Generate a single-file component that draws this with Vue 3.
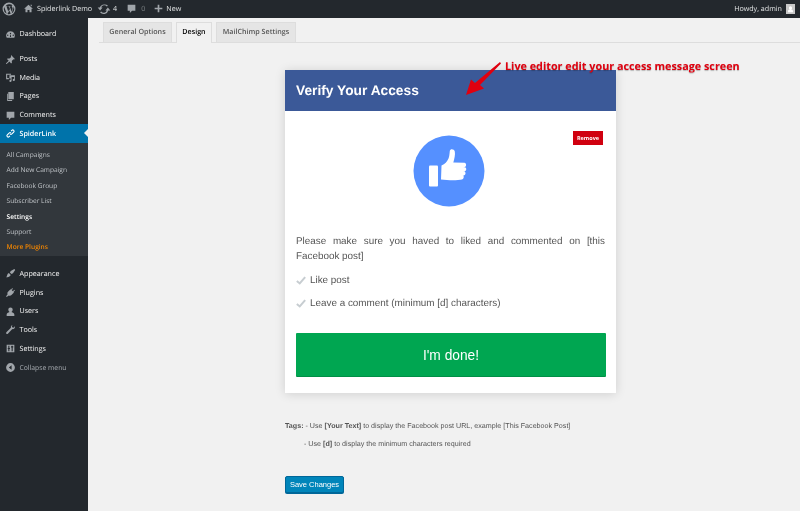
<script setup>
const top1 = [{ n: 'Posts', i: 'pin' }, { n: 'Media', i: 'media' }, { n: 'Pages', i: 'pages' }, { n: 'Comments', i: 'comment' }]
const subs = ['All Campaigns', 'Add New Campaign', 'Facebook Group', 'Subscriber List', 'Settings', 'Support', 'More Plugins']
const bottom = [{ n: 'Appearance', i: 'brush' }, { n: 'Plugins', i: 'plug' }, { n: 'Users', i: 'user' }, { n: 'Tools', i: 'wrench' }, { n: 'Settings', i: 'sliders' }]
const paths = {
  gauge: 'M10 4a8 8 0 0 0-8 8c0 1.600.5 3 1.200 4h13.600A8 8 0 0 0 10 4zm-5 8.500a1.200 1.200 0 1 1 0-2.400 1.200 1.200 0 0 1 0 2.400zM10 7a1.200 1.200 0 1 1 0 2.400A1.200 1.200 0 0 1 10 7zm1 7.500H9l.4-4 1.200 0zm4-2a1.200 1.200 0 1 1 0-2.400 1.200 1.200 0 0 1 0 2.400z',
  pin: 'M11 2l7 7-1.500 1-1.200-.5-3 3 .3 3.500-1.500 1.200-3-3.400L3 18l-1 0 0-1 4.800-4.600L3.600 9.300 4.800 8l3.400.4 3-3-.5-1.300z',
  media: 'M2 3h9v2H4v6h3v2H2zm6 3h10v8.500a2 2 0 1 1-1.500-1.900V9H12v7a2 2 0 1 1-1.500-1.900V12H8z',
  pages: 'M6 2h10v13H6zM4 5v13h9v-1.500H5.500V5z',
  comment: 'M3 3h14v11h-6l-4 4v-4H3z',
  brush: 'M17 2l1.500 1.500-4 6-2.600 1.600-3-3L10.500 5.500zM7 9l3.500 3.500-1 1.500c-1.500 2-4.500 3-7.500 3 1.500-1.500 1.500-3 2-4.500.4-1.400 1.500-2.700 3-3.500z',
  plug: 'M13 2l1.300 1-2 3 2 1.500 2.700-2.500 1 1.200-2.700 3 1 1-4.500 4.500c-1.500 1.300-3.500 1.500-5 .7L3 18l-1-1 2.800-3.600c-.8-1.500-.5-3.400.7-4.700l4.500-4.500 1 1z',
  user: 'M10 2.500a4 4 0 0 1 4 4c0 2-1 3.800-2.300 4.500 3 .7 5.300 2.500 5.300 4.500V18H3v-2.500c0-2 2.300-3.800 5.300-4.500C7 10.300 6 8.500 6 6.500a4 4 0 0 1 4-4z',
  wrench: 'M14.500 2c-2.500 0-4.300 2.200-3.800 4.700L2.500 14.800c-.8.800-.8 2 0 2.700s2 .8 2.700 0l8.100-8.200c2.700.5 4.900-1.500 4.700-4.200l-.2-.8-2.500 2.400-2.300-.6-.6-2.300 2.400-2.500z',
  sliders: 'M3 3h14v14H3zm3 2v4H5v2h1v4h2v-4h1V9H8V5zm6 0v1h-1v2h1v7h2V8h1V6h-1V5z',
  collapse: 'M10 2a8 8 0 1 0 0 16 8 8 0 0 0 0-16zm2 4v8L7 10z',
  link: 'M8.500 11.500a3.300 3.300 0 0 0 4.700 0l3.300-3.300a3.300 3.300 0 1 0-4.700-4.700L10.300 5l1.500 1.400 1.400-1.400a1.300 1.300 0 0 1 1.900 1.900l-3.300 3.300a1.300 1.300 0 0 1-1.900 0zM11.500 8.500a3.300 3.300 0 0 0-4.700 0l-3.300 3.300a3.300 3.300 0 1 0 4.700 4.700L9.700 15l-1.500-1.400-1.400 1.400a1.300 1.300 0 0 1-1.900-1.900l3.300-3.300a1.300 1.300 0 0 1 1.900 0z'
}
</script>

<template>
  <div class="page">
    <header class="bar">
      <svg class="wp" viewBox="0 0 20 20"><path fill-rule="evenodd" d="M10 .8a9.200 9.200 0 1 0 0 18.400A9.200 9.200 0 0 0 10 .8zM2.600 10c0-1 .2-2 .6-2.900l3.500 9.700A7.400 7.400 0 0 1 2.600 10zm7.400 7.400c-.7 0-1.400-.1-2.100-.3l2.200-6.500 2.300 6.200v.1c-.7.300-1.500.5-2.400.5zm1-10.900l.9-.1c.4 0 .4-.7 0-.6l-1.300.1-1.300-.1c-.4 0-.5.6-.1.6l.8.1 1.300 3.400-1.800 5.300-3-8.700.9-.1c.4 0 .4-.7 0-.6l-2.400.1A7.400 7.400 0 0 1 15 4.500c-.7 0-1.200.6-1.200 1.200 0 .6.300 1.100.7 1.700.3.500.6 1.100.6 2 0 .6-.2 1.300-.5 2.300l-.7 2.300zm2.700 9.900l2.300-6.500c.4-1.100.6-1.900.6-2.700 0-.3 0-.6-.1-.8A7.400 7.400 0 0 1 13.700 16.400z"/></svg>
      <span class="bi home"><svg viewBox="0 0 20 20"><path d="M10 3l8 7.500h-2.500V17h-3.700v-4.500H8.200V17H4.500v-6.500H2zm3.500 0H16v3.200l-2.500-2.300z"/></svg>Spiderlink Demo</span>
      <span class="bi updates"><svg viewBox="0 0 20 20"><path d="M10 3.500c-2.900 0-5.300 1.900-6.100 4.500H1l3.500 4L8 8H6a4.500 4.500 0 0 1 8-1.500l1.700-1.300A6.800 6.800 0 0 0 10 3.500zM15.500 8L12 12h2a4.500 4.500 0 0 1-8 1.500l-1.700 1.300a6.800 6.800 0 0 0 11.800-2.800H19z"/></svg>4</span>
      <span class="bi comments"><svg viewBox="0 0 20 20"><path d="M3 3h14v11h-6l-4 4v-4H3z"/></svg><i>0</i></span>
      <span class="bi newb"><svg viewBox="0 0 20 20"><path d="M8.500 3h3v5.500H17v3h-5.500V17h-3v-5.500H3v-3h5.500z"/></svg>New</span>
      <span class="howdy">Howdy, admin<span class="avatar"><svg viewBox="0 0 20 20"><path fill="#fff" d="M10 4a3.500 3.500 0 0 1 3.500 3.500c0 1.700-.8 3-2 3.700 2.500.5 4 1.800 4 3.800v2h-11v-2c0-2 1.500-3.300 4-3.800-1.200-.7-2-2-2-3.700A3.500 3.500 0 0 1 10 4z"/></svg></span></span>
    </header>

    <div class="body">
      <nav class="side">
        <a class="item first"><svg viewBox="0 0 20 20"><path :d="paths.gauge" /></svg>Dashboard</a>
        <div class="sep"></div>
        <a v-for="t in top1" :key="t.n" class="item"><svg viewBox="0 0 20 20"><path :d="paths[t.i]" /></svg>{{ t.n }}</a>
        <a class="item active"><svg viewBox="0 0 20 20"><path :d="paths.link" /></svg>SpiderLink</a>
        <ul class="sub">
          <li v-for="s in subs" :key="s" :class="{ cur: s === 'Settings', more: s === 'More Plugins' }">{{ s }}</li>
        </ul>
        <div class="sep2"></div>
        <a v-for="t in bottom" :key="t.n" class="item"><svg viewBox="0 0 20 20"><path :d="paths[t.i]" /></svg>{{ t.n }}</a>
        <a class="item collapse"><svg viewBox="0 0 20 20"><path :d="paths.collapse" /></svg>Collapse menu</a>
      </nav>

      <main class="main">
        <div class="tabs">
          <span class="tab t1">General Options</span>
          <span class="tab t2 on">Design</span>
          <span class="tab t3">MailChimp Settings</span>
        </div>

        <div class="content">
          <section class="card">
            <h2 class="head">Verify Your Access</h2>
            <div class="cbody">
              <button class="remove">Remove</button>
              <div class="thumb">
                <svg viewBox="0 0 72 72" width="72" height="72">
                  <circle cx="36" cy="36" r="35.500" fill="#5590ff" />
                  <rect x="16" y="30.500" width="9" height="21" rx="1" fill="#fff" />
                  <path fill="#fff" d="M28.500 30.500c3.500-1.500 5.500-3.500 7-7 .8-2 1-4 1.300-7.500.4-2.500 4.400-2 5 .5.600 3-.4 7.500-1.500 11l11.200.2c2 .1 2.200 3.700.2 4.300l-1.500.3h2c1.500.8 1.500 3.500-.5 4l-1.500.2h1.500c1.300.8 1.200 3.400-.8 4l-1.500.2h1c.8 1 .3 3.300-1.500 3.800-1.500.4-6 .7-8.800.7-4 0-8.400-.5-12.100-.8z" />
                </svg>
              </div>
              <p class="msg">Please make sure you haved to liked and commented on [this Facebook post]</p>
              <div class="check first-check"><svg viewBox="0 0 12 10" width="10" height="9"><path d="M1 5.500l3.500 3L11 1" fill="none" stroke="#c7cdd1" stroke-width="2.400" /></svg>Like post</div>
              <div class="check"><svg viewBox="0 0 12 10" width="10" height="9"><path d="M1 5.500l3.500 3L11 1" fill="none" stroke="#c7cdd1" stroke-width="2.400" /></svg>Leave a comment (minimum [d] characters)</div>
              <button class="done">I'm done!</button>
            </div>
          </section>

          <p class="tags"><b>Tags:</b> - Use <b>[Your Text]</b> to display the Facebook post URL, example [This Facebook Post]</p>
          <p class="tags second">- Use <b>[d]</b> to display the minimum characters required</p>
          <button class="save">Save Changes</button>
        </div>

        <div class="note">
          <svg class="arrow" viewBox="0 0 40 36" width="40" height="36"><path fill="#e0000f" d="M36 0l1 1.500-21 21.500 4 3.500L2 33l5-15.500 4 3.500z" /></svg>
          <span>Live editor edit your access message screen</span>
        </div>
      </main>
    </div>
  </div>
</template>

<style scoped>
.page { width: 800px; height: 511px; overflow: hidden; display: flex; flex-direction: column; font-family: "Open Sans", sans-serif; background: #f1f1f1; text-rendering: geometricPrecision; filter: blur(.2px); }
.bar { height: 17.600px; flex: none; background: #23282d; display: flex; align-items: center; font-size: 7.150px; padding-left: 2px; }
.wp { width: 14px; height: 14px; fill: #a0a5aa; margin-right: 7px; flex: none; }
.bi { display: flex; align-items: center; margin-right: 9px; color: #e2e4e5; }
.bi svg { width: 11px; height: 11px; fill: #a0a5aa; margin-right: 3px; flex: none; }
.home { margin-right: 5px; }
.bi i { font-style: normal; color: #7f8487; }
.updates svg { width: 14px; height: 14px; margin-right: 2px; }
.comments { margin-right: 8px; }
.comments svg { margin-right: 4px; }
.newb svg { margin-right: 2px; }
.howdy { margin-left: auto; display: flex; align-items: center; gap: 4px; padding-right: 5px; color: #e2e4e5; }
.avatar { width: 9px; height: 10px; background: #c8c8c8; display: block; overflow: hidden; }
.avatar svg { display: block; width: 9px; height: 10px; }
.body { flex: 1; display: flex; min-height: 0; }
.side { width: 88px; flex: none; background: #23282d; font-size: 7.150px; }
.item { display: flex; align-items: center; height: 18.700px; padding-left: 4.500px; color: #f4f4f4; }
.item svg { width: 11px; height: 11px; fill: #a0a5aa; margin-right: 4px; flex: none; }
.first { margin-top: 7.200px; }
.sep { height: 6.200px; }
.active { background: #0073aa; color: #fff; position: relative; font-weight: 600; }
.active svg { fill: #fff; }
.active::after { content: ""; position: absolute; right: 0; top: 5px; border: 4px solid transparent; border-right-color: #f1f1f1; border-left: 0; }
.sub { margin: 0; padding: 3.850px 0 1.500px; list-style: none; background: #32373c; font-size: 6.600px; }
.sub li { height: 15.400px; line-height: 15.400px; padding-left: 6.600px; color: #c3c7cb; }
.sub .cur { color: #fff; font-weight: 600; }
.sub .more { color: #f18500; font-weight: 600; }
.sep2 { height: 8.300px; }
.collapse { color: #a8adb2; font-size: 6.800px; }
.main { flex: 1; min-width: 0; position: relative; background: #f1f1f1; }
.tabs { display: flex; gap: 4px; padding: 4.500px 0 0 4px; height: 25px; box-sizing: border-box; border-bottom: 1px solid #ddd; margin-left: 11px; }
.tab { height: 20px; line-height: 19px; text-align: center; box-sizing: border-box; background: #e5e5e5; border: 1px solid #ddd; border-bottom: 0; color: #555; font-size: 7.150px; font-weight: 600; white-space: nowrap; }
.t1 { width: 69px; }
.t2 { width: 36px; }
.t3 { width: 80px; }
.tab.on { background: #f1f1f1; color: #000; height: 20.500px; }
.content { padding: 27.400px 0 0 197px; }
.card { width: 331px; background: #fff; box-shadow: 0 1px 10px rgba(0,0,0,.14); height: 323px; display: flex; flex-direction: column; }
.head { margin: 0; height: 41px; padding-left: 11px; background: #3b5998; color: #fff; font: 700 13.750px/41px "Liberation Sans", sans-serif; }
.cbody { position: relative; padding: 25px 10px 0 11px; flex: 1; font-family: "Liberation Sans", sans-serif; color: #555; }
.remove { position: absolute; top: 20px; right: 13px; width: 30px; height: 14px; padding: 0; border: 0; background: #d0000f; color: #fff; font: 700 5.500px/14px "Open Sans", sans-serif; }
.thumb { display: flex; justify-content: center; padding-right: 5px; margin-top: -1px; }
.thumb svg { display: block; }
.msg { margin: 27px 1px 0 0; font-size: 9.900px; line-height: 15px; text-align: justify; color: #555; }
.check { display: flex; align-items: center; gap: 4px; font-size: 9.900px; line-height: 15px; color: #555; margin-top: 8px; }
.first-check { margin-top: 9px; }
.done { display: block; width: 310px; height: 43.500px; margin-top: 22px; border: 0; border-radius: 1px; background: #00a651; color: #fff; font: 400 13.750px/43px "Liberation Sans", sans-serif; box-shadow: 0 1px 0 #008f46; }
.tags { margin: 28px 0 0; font: 400 7.150px/10px "Liberation Sans", sans-serif; color: #555; white-space: nowrap; }
.tags.second { margin: 8px 0 0 19px; }
.save { display: block; margin-top: 27px; width: 59px; height: 17px; padding: 0; border: 1px solid #006799; border-radius: 2px; background: #0085ba; color: #fff; font: 400 7.500px/15px "Liberation Sans", sans-serif; box-shadow: 0 1px 0 #006799; }
.note { position: absolute; left: 376px; top: 40px; color: #e0000f; font-size: 10.800px; font-weight: 700; text-shadow: 0 1px 1px rgba(0,0,0,.25); white-space: nowrap; }
.note span { position: absolute; left: 41px; top: 2px; line-height: 14px; }
.arrow { display: block; position: absolute; left: 0; top: 4px; }
</style>
